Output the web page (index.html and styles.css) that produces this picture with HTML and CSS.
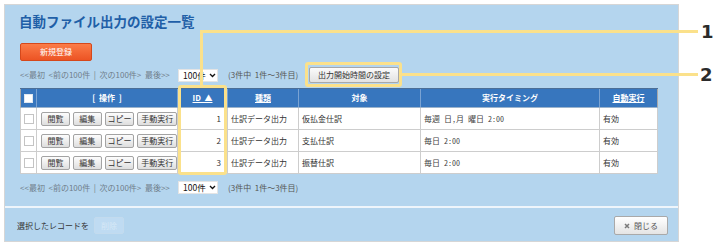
FILE: index.html
```html
<!DOCTYPE html>
<html lang="ja">
<head>
<meta charset="utf-8">
<title>自動ファイル出力の設定一覧</title>
<link rel="stylesheet" href="styles.css">
</head>
<body>
<div class="panel">
  <div class="main">
    <h1 class="title">自動ファイル出力の設定一覧</h1>
    <button class="btn-new">新規登録</button>
    <div class="pager">
      <span class="pager-links">&lt;&lt;最初&nbsp; &lt;前の100件&nbsp; |&nbsp; 次の100件&gt;&nbsp; 最後&gt;&gt;</span>
      <span class="select">100件<svg class="chev" viewBox="0 0 8 6" width="7" height="5"><path d="M1 1.2 L4 4.2 L7 1.2" fill="none" stroke="#111" stroke-width="1.6"/></svg></span>
      <span class="count">(3件中&nbsp; 1件～3件目)</span>
      <button class="btn-time">出力開始時間の設定</button>
    </div>
    <table class="grid">
      <colgroup>
        <col class="w-chk"><col class="w-op"><col class="w-id"><col class="w-kind"><col class="w-target"><col class="w-timing"><col class="w-auto">
      </colgroup>
      <thead>
        <tr>
          <th><span class="hchk"></span></th>
          <th>[&nbsp; 操作 &nbsp;]</th>
          <th><span class="link">ID&nbsp;&nbsp;▲</span></th>
          <th><span class="link">種類</span></th>
          <th>対象</th>
          <th>実行タイミング</th>
          <th><span class="link">自動実行</span></th>
        </tr>
      </thead>
      <tbody>
        <tr>
          <td class="c-chk"><span class="chk"></span></td>
          <td class="c-op"><span class="ops"><button class="sb b2">閲覧</button><button class="sb b2">編集</button><button class="sb b3">コピー</button><button class="sb b4">手動実行</button></span></td>
          <td class="c-id">1</td>
          <td>仕訳データ出力</td>
          <td>仮払金仕訳</td>
          <td class="c-timing">毎週 日,月 曜日 2:00</td>
          <td>有効</td>
        </tr>
        <tr>
          <td class="c-chk"><span class="chk"></span></td>
          <td class="c-op"><span class="ops"><button class="sb b2">閲覧</button><button class="sb b2">編集</button><button class="sb b3">コピー</button><button class="sb b4">手動実行</button></span></td>
          <td class="c-id">2</td>
          <td>仕訳データ出力</td>
          <td>支払仕訳</td>
          <td class="c-timing">毎日 2:00</td>
          <td>有効</td>
        </tr>
        <tr>
          <td class="c-chk"><span class="chk"></span></td>
          <td class="c-op"><span class="ops"><button class="sb b2">閲覧</button><button class="sb b2">編集</button><button class="sb b3">コピー</button><button class="sb b4">手動実行</button></span></td>
          <td class="c-id">3</td>
          <td>仕訳データ出力</td>
          <td>振替仕訳</td>
          <td class="c-timing">毎日 2:00</td>
          <td>有効</td>
        </tr>
      </tbody>
    </table>
    <div class="pager pager-bottom">
      <span class="pager-links">&lt;&lt;最初&nbsp; &lt;前の100件&nbsp; |&nbsp; 次の100件&gt;&nbsp; 最後&gt;&gt;</span>
      <span class="select">100件<svg class="chev" viewBox="0 0 8 6" width="7" height="5"><path d="M1 1.2 L4 4.2 L7 1.2" fill="none" stroke="#111" stroke-width="1.6"/></svg></span>
      <span class="count">(3件中&nbsp; 1件～3件目)</span>
    </div>
  </div>
  <div class="footer">
    <div class="footer-left">
      <span class="sel-label">選択したレコードを</span>
      <button class="btn-del" disabled>削除</button>
    </div>
    <button class="btn-close"><svg class="x-icon" viewBox="0 0 6 6" width="6" height="6"><path d="M1 1 L5 5 M5 1 L1 5" stroke="#7a7a7a" stroke-width="1.5" fill="none"/></svg>閉じる</button>
  </div>
</div>

<div class="hl hl-id"></div>
<div class="hl hl-btn"></div>
<div class="lead lead-v1"></div>
<div class="lead lead-h1"></div>
<div class="lead lead-h2"></div>
<div class="callout callout-1">1</div>
<div class="callout callout-2">2</div>
</body>
</html>
```

FILE: styles.css
```css
* { box-sizing: border-box; }
html, body { margin: 0; padding: 0; background: #fff; }
body {
  position: relative;
  width: 719px;
  height: 246px;
  overflow: hidden;
  font-family: "Noto Sans CJK JP", sans-serif;
  font-size: 8px;
  line-height: 10px;
  color: #333;
}
button {
  font-family: inherit;
  font-size: 8px;
  line-height: 10px;
  padding: 0;
  margin: 0;
  cursor: pointer;
}

.panel {
  margin: 4px 0 0 4px;
  width: 675px;
  border: 1px solid #d6d6d6;
  background: #b4d5ee;
}
.main { padding: 7px 0 10px 15px; }

.title {
  margin: 0 0 0 -1px;
  font-size: 13.5px;
  line-height: 18px;
  font-weight: bold;
  color: #1f5fa7;
}

.btn-new {
  display: block;
  margin-top: 13px;
  width: 72px;
  height: 18px;
  border: 1px solid #d5481b;
  border-radius: 2px;
  background: linear-gradient(#fb7c48, #ec5424);
  color: #fff;
}

.pager {
  display: flex;
  align-items: center;
  height: 18px;
  margin-top: 5px;
  white-space: nowrap;
}
.pager-bottom { height: 17px; margin-top: 5px; }
.pager-links { color: #6f7d8a; width: 158px; overflow: hidden; }
.select {
  display: flex;
  align-items: center;
  flex: none;
  width: 40px;
  height: 13px;
  padding-left: 4px;
  background: #fff;
  border: 1px solid #e4e4e4;
  color: #111;
  font-size: 8.5px;
  line-height: 11px;
  white-space: nowrap;
}
.chev { margin-left: 3px; flex: none; }
.count { margin-left: 10px; color: #555; width: 81px; }
.btn-time {
  flex: none;
  width: 90px;
  height: 16px;
  border: 1px solid #a8a8a8;
  border-radius: 2px;
  background: linear-gradient(#fbfbfb, #e2e2e2);
  color: #333;
}

.grid {
  margin-top: 4px;
  width: 637px;
  table-layout: fixed;
  border-collapse: collapse;
  background: #fff;
  border: 1px solid #a9a9a9;
}
.w-chk { width: 16px; }
.w-op { width: 141px; }
.w-id { width: 50px; }
.w-kind { width: 71px; }
.w-target { width: 122px; }
.w-timing { width: 179px; }
.w-auto { width: 58px; }

.grid th {
  height: 19px;
  padding: 0;
  background: #3776be;
  color: #fff;
  font-weight: bold;
  text-align: center;
  border-left: 1px solid #7aa3d3;
  border-top: 1px solid #4c6f97;
  border-bottom: 1px solid #9bb3cc;
}
.grid th:first-child { border-left: none; }
.link { text-decoration: underline; }
.hchk {
  display: block;
  width: 9px;
  height: 9px;
  margin: 0 auto;
  background: #fff;
  border: 1px solid #dfe8f2;
}

.grid td {
  height: 22px;
  padding: 0 0 0 3px;
  border: 1px solid #cdcdcd;
  white-space: nowrap;
  color: #333;
}
.grid td.c-chk { padding: 0; }
.chk {
  display: block;
  width: 10px;
  height: 10px;
  margin-left: 3px;
  border: 1px solid #c4c4c4;
  background: #fff;
}
.grid td.c-op { padding: 0 0 0 4px; }
.ops { display: flex; gap: 3px; }
.sb {
  height: 14px;
  border: 1px solid #a3a3a3;
  border-radius: 2px;
  background: linear-gradient(#fdfdfd, #dedede);
  color: #333;
}
.b2 { width: 29px; }
.b3 { width: 30px; }
.b4 { width: 40px; }
.grid td.c-id { text-align: right; padding: 0 6px 0 0; }
.grid td.c-timing {
  font-family: "Noto Sans Mono CJK JP", "Liberation Mono", "Noto Sans CJK JP", monospace;
  color: #444;
}

.footer {
  display: flex;
  align-items: center;
  justify-content: space-between;
  height: 35px;
  padding: 2px 10px 0 12px;
  border-top: 2px solid #eef5fb;
}
.footer-left { display: flex; align-items: center; }
.sel-label { color: #333; }
.btn-del {
  margin-left: 5px;
  width: 30px;
  height: 17px;
  border: 1px solid #c3dbee;
  border-radius: 2px;
  background: #bfdbf2;
  color: #d6e8f6;
  cursor: default;
}
.btn-close {
  display: flex;
  align-items: center;
  justify-content: center;
  width: 54px;
  height: 19px;
  border: 1px solid #a9a9a9;
  border-radius: 2px;
  background: linear-gradient(#ffffff, #e4e4e4);
  color: #555;
}
.x-icon { margin-right: 4px; }

/* annotation overlays */
.hl {
  position: absolute;
  border: 3px solid #fbe18b;
  border-radius: 3px;
}
.hl-id { left: 178px; top: 85px; width: 49px; height: 90px; }
.hl-btn { left: 305px; top: 62px; width: 97px; height: 25px; }
.lead { position: absolute; background: #fbe18b; }
.lead-v1 { left: 200px; top: 30px; width: 3px; height: 55px; }
.lead-h1 { left: 200px; top: 30px; width: 498px; height: 3px; }
.lead-h2 { left: 402px; top: 73px; width: 296px; height: 3px; }
.callout {
  position: absolute;
  left: 701px;
  font-family: "DejaVu Sans", sans-serif;
  font-weight: bold;
  font-size: 18px;
  line-height: 18px;
  color: #2b2b2b;
}
.callout-1 { top: 23px; }
.callout-2 { top: 66px; left: 700px; }
```
